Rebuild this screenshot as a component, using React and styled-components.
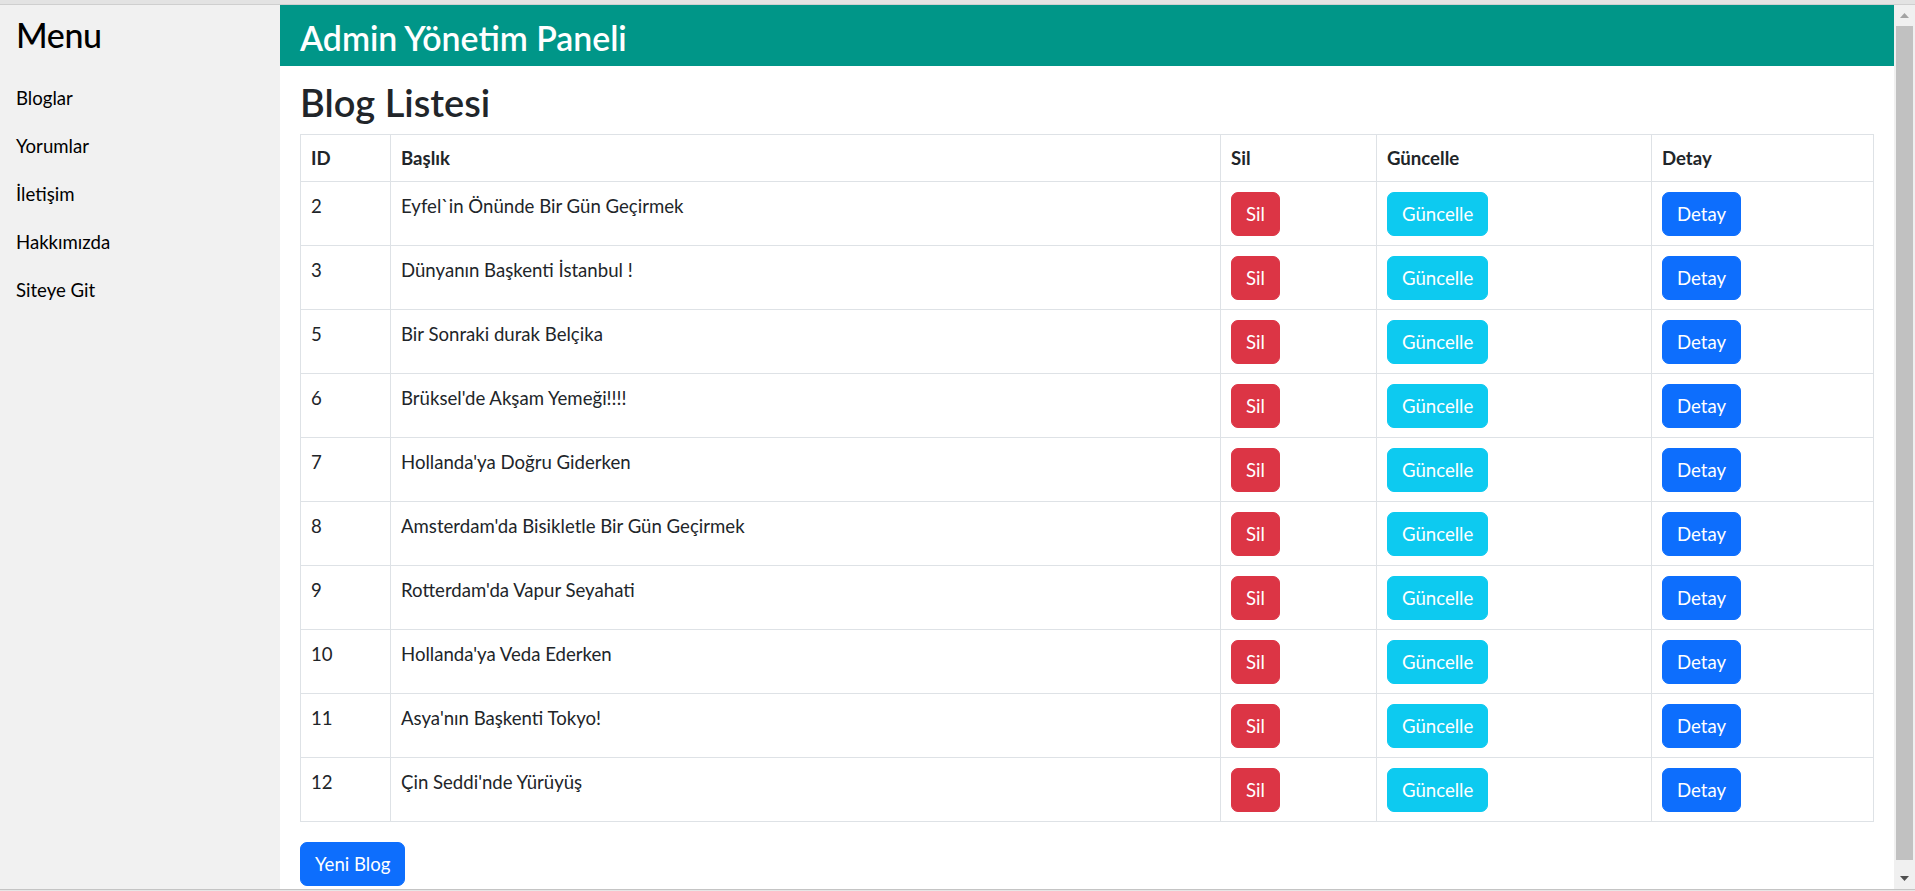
import React from "react";
import styled, { createGlobalStyle } from "styled-components";

const Global = createGlobalStyle`
  * { box-sizing: border-box; }
  html, body { margin: 0; padding: 0; height: 100%; overflow: hidden; }
  body {
    font-family: Lato, "Open Sans", "Noto Sans", sans-serif;
    font-size: 18.6px;
    color: #212529;
    background: #fff;
  }
`;

const Frame = styled.div`
  display: flex;
  flex-direction: column;
  height: 891px;
  width: 1915px;
`;

const ChromeTop = styled.div`
  height: 5px;
  background: #e3e3e3;
  border-bottom: 1px solid #cfcfcf;
  flex: none;
`;

const ChromeBottom = styled.div`
  height: 2px;
  background: #e6e6e6;
  border-top: 1px solid #c4c4c4;
  flex: none;
`;

const Viewport = styled.div`
  flex: 1;
  display: flex;
  min-height: 0;
`;

const Sidebar = styled.aside`
  width: 280px;
  flex: none;
  background: #f1f1f1;
  padding: 9px 16px 0;
`;

const MenuTitle = styled.h2`
  margin: 0 0 18.5px;
  font-size: 34px;
  line-height: 41px;
  letter-spacing: -0.4px;
  font-weight: 500;
  color: #000;
`;

const NavList = styled.nav`
  display: flex;
  flex-direction: column;
`;

const NavLink = styled.a`
  display: block;
  padding: 10px 0;
  line-height: 28px;
  color: #000;
  text-decoration: none;
`;

const Main = styled.main`
  flex: 1;
  display: flex;
  flex-direction: column;
  min-width: 0;
`;

const Header = styled.header`
  height: 61px;
  background: #009688;
  padding: 12.5px 20px 0;
`;

const HeaderTitle = styled.h2`
  margin: 0;
  font-size: 33.8px;
  line-height: 1.2;
  font-weight: 600;
  color: #fff;
`;

const Content = styled.section`
  padding: 13.5px 20px 0;
`;

const PageTitle = styled.h1`
  margin: 0 0 9px;
  font-size: 38px;
  line-height: 1.2;
  font-weight: 600;
  color: #212529;
`;

const Table = styled.table`
  width: 100%;
  border-collapse: collapse;
  table-layout: fixed;
  margin-bottom: 20px;
  color: #212529;
`;

const Th = styled.th`
  text-align: left;
  font-weight: 700;
  padding: 9px 10px;
  line-height: 28px;
  border: 1px solid #dee2e6;
  vertical-align: top;
`;

const Td = styled.td`
  padding: 9.5px 10px;
  line-height: 28px;
  border: 1px solid #dee2e6;
  vertical-align: top;
`;

const COLORS = {
  danger: "#dc3545",
  info: "#0dcaf0",
  primary: "#0d6efd",
};

const Button = styled.button`
  display: inline-block;
  font-family: inherit;
  font-size: 18.6px;
  line-height: 28px;
  padding: 7px 14px;
  border: 1px solid ${(p) => COLORS[p.$variant]};
  background: ${(p) => COLORS[p.$variant]};
  color: #fff;
  border-radius: 7px;
  cursor: pointer;
`;

const Scrollbar = styled.div`
  width: 21px;
  flex: none;
  background: #f0f0f0;
  display: flex;
  flex-direction: column;
  align-items: center;
`;

const ArrowBox = styled.div`
  height: 21px;
  width: 100%;
  display: flex;
  align-items: center;
  justify-content: center;
  flex: none;
`;

const Thumb = styled.div`
  width: 17px;
  height: 834px;
  background: #c1c1c1;
  flex: none;
`;

const Spacer = styled.div`
  flex: 1;
`;

const blogs = [
  [2, "Eyfel`in Önünde Bir Gün Geçirmek"],
  [3, "Dünyanın Başkenti İstanbul !"],
  [5, "Bir Sonraki durak Belçika"],
  [6, "Brüksel'de Akşam Yemeği!!!!"],
  [7, "Hollanda'ya Doğru Giderken"],
  [8, "Amsterdam'da Bisikletle Bir Gün Geçirmek"],
  [9, "Rotterdam'da Vapur Seyahati"],
  [10, "Hollanda'ya Veda Ederken"],
  [11, "Asya'nın Başkenti Tokyo!"],
  [12, "Çin Seddi'nde Yürüyüş"],
];

const menu = ["Bloglar", "Yorumlar", "İletişim", "Hakkımızda", "Siteye Git"];

export default function App() {
  return (
    <>
      <Global />
      <Frame>
        <ChromeTop />
        <Viewport>
          <Sidebar>
            <MenuTitle>Menu</MenuTitle>
            <NavList>
              {menu.map((m) => (
                <NavLink key={m} href="#">
                  {m}
                </NavLink>
              ))}
            </NavList>
          </Sidebar>
          <Main>
            <Header>
              <HeaderTitle>Admin Yönetim Paneli</HeaderTitle>
            </Header>
            <Content>
              <PageTitle>Blog Listesi</PageTitle>
              <Table>
                <colgroup>
                  <col style={{ width: 90 }} />
                  <col style={{ width: 830 }} />
                  <col style={{ width: 156 }} />
                  <col style={{ width: 275 }} />
                  <col />
                </colgroup>
                <thead>
                  <tr>
                    <Th>ID</Th>
                    <Th>Başlık</Th>
                    <Th>Sil</Th>
                    <Th>Güncelle</Th>
                    <Th>Detay</Th>
                  </tr>
                </thead>
                <tbody>
                  {blogs.map(([id, title]) => (
                    <tr key={id}>
                      <Td>{id}</Td>
                      <Td>{title}</Td>
                      <Td>
                        <Button $variant="danger">Sil</Button>
                      </Td>
                      <Td>
                        <Button $variant="info">Güncelle</Button>
                      </Td>
                      <Td>
                        <Button $variant="primary">Detay</Button>
                      </Td>
                    </tr>
                  ))}
                </tbody>
              </Table>
              <Button $variant="primary">Yeni Blog</Button>
            </Content>
          </Main>
          <Scrollbar>
            <ArrowBox>
              <svg width="9" height="5" viewBox="0 0 9 5">
                <polygon points="0,5 4.5,0 9,5" fill="#a3a3a3" />
              </svg>
            </ArrowBox>
            <Thumb />
            <Spacer />
            <ArrowBox>
              <svg width="9" height="5" viewBox="0 0 9 5">
                <polygon points="0,0 9,0 4.5,5" fill="#505050" />
              </svg>
            </ArrowBox>
          </Scrollbar>
        </Viewport>
        <ChromeBottom />
      </Frame>
    </>
  );
}
